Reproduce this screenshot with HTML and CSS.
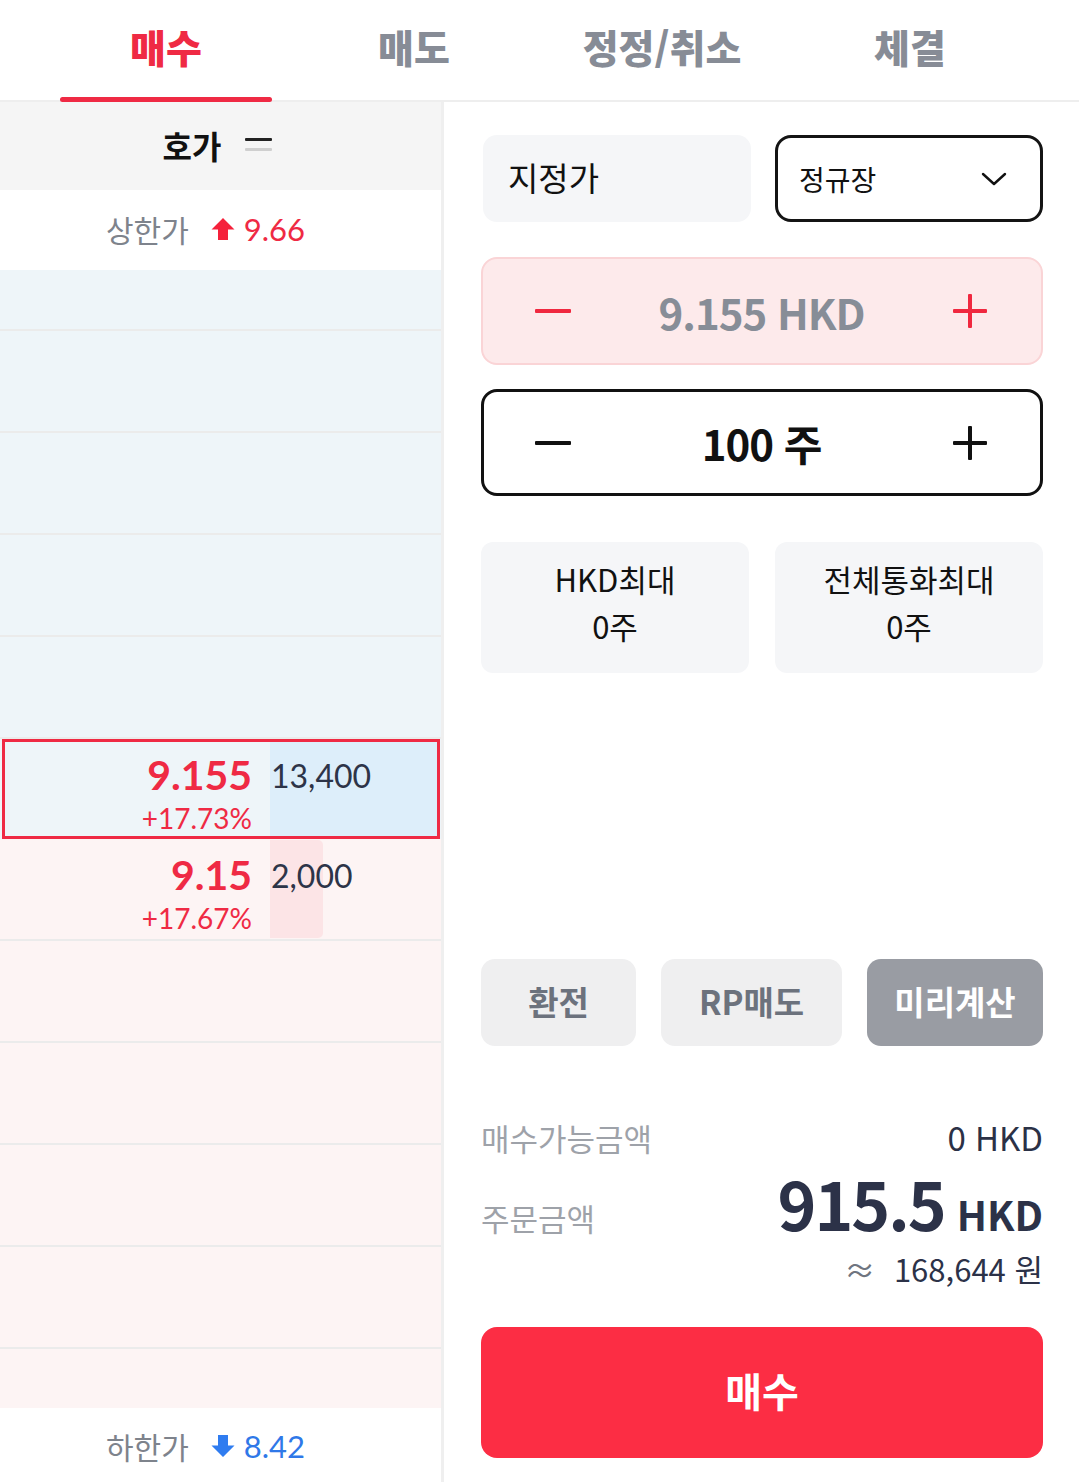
FILE: index.html
```html
<!DOCTYPE html>
<html lang="ko">
<head>
<meta charset="utf-8">
<title>주문</title>
<link rel="stylesheet" href="styles.css">
</head>
<body>
<div class="app">
  <nav class="tabs">
    <div class="tab active">매수</div>
    <div class="tab">매도</div>
    <div class="tab">정정/취소</div>
    <div class="tab">체결</div>
  </nav>
  <div class="main">
    <section class="book">
      <div class="book-head">
        <span class="book-title">호가</span>
        <span class="eq-icon"><i class="eq-top"></i><i class="eq-bot"></i></span>
      </div>
      <div class="limit up">
        <span class="limit-label">상한가</span>
        <svg class="arr" width="24" height="24" viewBox="0 0 24 24"><path d="M12 1 L23.5 12.5 H17 V23 H7 V12.5 H0.5 Z" fill="#f5213b"/></svg>
        <span class="limit-val up-val">9.66</span>
      </div>
      <div class="ladder">
        <div class="lv ask first"></div>
        <div class="lv ask"></div>
        <div class="lv ask"></div>
        <div class="lv ask"></div>
        <div class="lv ask"></div>
        <div class="lv ask cur">
          <div class="px"><b>9.155</b><span>+17.73%</span></div>
          <div class="qty"><i class="bar ask-bar" style="width:100%"></i><span>13,400</span></div>
        </div>
        <div class="lv bid">
          <div class="px"><b>9.15</b><span>+17.67%</span></div>
          <div class="qty"><i class="bar bid-bar" style="width:31%"></i><span>2,000</span></div>
        </div>
        <div class="lv bid"></div>
        <div class="lv bid"></div>
        <div class="lv bid"></div>
        <div class="lv bid"></div>
        <div class="lv bid"></div>
      </div>
      <div class="limit down">
        <span class="limit-label">하한가</span>
        <svg class="arr" width="24" height="24" viewBox="0 0 24 24"><path d="M12 23 L23.5 11.5 H17 V1 H7 V11.5 H0.5 Z" fill="#2f7cf0"/></svg>
        <span class="limit-val down-val">8.42</span>
      </div>
    </section>

    <section class="order">
      <div class="row-type">
        <div class="type-box">지정가</div>
        <div class="session-box">
          <span>정규장</span>
          <svg width="26" height="14" viewBox="0 0 26 14"><path d="M2 2 L13 12 L24 2" fill="none" stroke="#111" stroke-width="2.4" stroke-linecap="round" stroke-linejoin="round"/></svg>
        </div>
      </div>

      <div class="stepper price-step">
        <svg class="step-ic" width="36" height="34" viewBox="0 0 36 34"><rect x="0" y="15" width="36" height="4" rx="1" fill="#f0283f"/></svg>
        <span class="step-val price-val">9.155 HKD</span>
        <svg class="step-ic" width="36" height="34" viewBox="0 0 36 34"><rect x="1" y="15" width="34" height="4" rx="1" fill="#f0283f"/><rect x="16" y="0" width="4" height="34" rx="1" fill="#f0283f"/></svg>
      </div>

      <div class="stepper qty-step">
        <svg class="step-ic" width="36" height="34" viewBox="0 0 36 34"><rect x="0" y="15" width="36" height="4" rx="1" fill="#111"/></svg>
        <span class="step-val qty-val">100 주</span>
        <svg class="step-ic" width="36" height="34" viewBox="0 0 36 34"><rect x="1" y="15" width="34" height="4" rx="1" fill="#111"/><rect x="16" y="0" width="4" height="34" rx="1" fill="#111"/></svg>
      </div>

      <div class="max-row">
        <div class="max-box"><span>HKD최대</span><span>0주</span></div>
        <div class="max-box"><span>전체통화최대</span><span>0주</span></div>
      </div>

      <div class="actions">
        <div class="act">환전</div>
        <div class="act">RP매도</div>
        <div class="act dark">미리계산</div>
      </div>

      <div class="summary">
        <div class="sum-row r1">
          <span class="sum-label">매수가능금액</span>
          <span class="sum-val">0 HKD</span>
        </div>
        <div class="sum-row r2">
          <span class="sum-label">주문금액</span>
          <span class="total"><b>915.5</b><em>HKD</em></span>
        </div>
        <div class="sum-row r3">
          <span></span>
          <span class="krw"><i>≈</i> 168,644 원</span>
        </div>
      </div>

      <div class="buy-btn">매수</div>
    </section>
  </div>
</div>
</body>
</html>
```

FILE: styles.css
```css
* { box-sizing: border-box; }
html, body { margin: 0; padding: 0; background: #fff; }
body {
  width: 1079px;
  height: 1482px;
  overflow: hidden;
  font-family: "Noto Sans CJK KR", "Noto Sans", sans-serif;
  color: #111;
}
.app { width: 1079px; height: 1482px; display: flex; flex-direction: column; }

/* tabs */
.tabs {
  height: 102px;
  display: grid;
  grid-template-columns: repeat(4, 248px);
  padding-left: 42px;
  border-bottom: 2px solid #eeeeee;
}
.tab {
  position: relative;
  display: flex;
  align-items: center;
  justify-content: center;
  padding-bottom: 8px;
  font-size: 39px;
  font-weight: 900;
  color: #878c96;
}
.tab.active { color: #ef2a44; }
.tab.active::after {
  content: "";
  position: absolute;
  left: 18px;
  right: 18px;
  bottom: -2px;
  height: 5px;
  border-radius: 3px;
  background: #ef2a44;
}

.main { flex: 1; display: flex; }

/* order book */
.book {
  width: 444px;
  border-right: 3px solid #efefef;
  display: flex;
  flex-direction: column;
}
.book-head {
  height: 88px;
  background: #f5f5f5;
  display: flex;
  align-items: center;
  justify-content: center;
  gap: 24px;
  padding-right: 6px;
  padding-bottom: 2px;
}
.book-title { font-size: 32px; font-weight: 700; color: #111; }
.eq-icon { display: flex; flex-direction: column; gap: 7px; width: 27px; margin-top: -2px; }
.eq-icon i { display: block; height: 3px; border-radius: 1px; }
.eq-top { background: #222; }
.eq-bot { background: #cfcfcf; }

.limit {
  display: flex;
  align-items: center;
  padding-left: 106px;
  background: #fff;
}
.limit.up { height: 80px; padding-bottom: 2px; }
.limit.down { height: 74px; padding-top: 2px; }
.limit-label { font-size: 30px; color: #7e838c; }
.arr { margin-left: 22px; margin-right: 9px; }
.limit-val { font-family: Lato, "Liberation Sans", sans-serif; font-size: 31px; }
.up-val { color: #ef2a44; }
.down-val { color: #2f78e8; }

.ladder { height: 1138px; overflow: hidden; }
.lv {
  position: relative;
  height: 102px;
  display: flex;
  border-bottom: 2px solid #ebebeb;
}
.lv.first { margin-top: -41px; }
.lv.ask { background: #eef5f9; }
.lv.bid { background: #fdf4f4; }
.lv.cur { height: 100px; border-bottom: 0; }
.lv.cur::after {
  content: "";
  position: absolute;
  top: 0; bottom: 0; left: 2px; right: 1px;
  border: 3px solid #ef2a44;
}
.px {
  width: 252px;
  display: flex;
  flex-direction: column;
  align-items: flex-end;
  padding-top: 13px;
  font-family: Lato, "Liberation Sans", sans-serif;
  color: #ef2a44;
}
.px b { font-size: 41px; font-weight: 700; line-height: 46px; }
.px span { font-size: 28px; line-height: 30px; margin-top: 5px; }
.qty {
  position: relative;
  flex: 1;
  margin-left: 18px;
  padding-top: 14px;
  padding-left: 1px;
  font-family: Lato, "Liberation Sans", sans-serif;
  font-size: 32px;
  line-height: 46px;
  color: #2d3448;
}
.qty span { position: relative; }
.bar { position: absolute; left: 0; top: 0; bottom: 0; }
.ask-bar { background: #ddeefa; top: 3px; bottom: 3px; right: 3px; width: auto !important; }
.bid-bar { background: #fce4e6; border-radius: 0 5px 5px 0; top: 1px; bottom: 1px; }

/* order form */
.order {
  flex: 1;
  display: flex;
  flex-direction: column;
  padding: 33px 36px 0 37px;
}
.row-type {
  display: grid;
  grid-template-columns: 270px 1fr;
  gap: 24px;
  height: 87px;
}
.type-box {
  background: #f5f6f8;
  border-radius: 14px;
  display: flex;
  align-items: center;
  padding-left: 25px;
  padding-bottom: 4px;
  font-size: 33px;
  color: #111;
  margin-left: 2px;
}
.session-box {
  border: 3px solid #141414;
  border-radius: 16px;
  display: flex;
  align-items: center;
  justify-content: space-between;
  padding: 0 33px 0 21px;
  font-size: 28px;
  color: #111;
}

.stepper {
  display: flex;
  align-items: center;
  justify-content: space-between;
  border-radius: 16px;
}
.price-step {
  margin-top: 35px;
  height: 108px;
  background: #fdeaeb;
  border: 2px solid #fad4d6;
  padding: 0 53px 0 52px;
}
.qty-step {
  margin-top: 24px;
  height: 107px;
  border: 3px solid #111;
  padding: 0 52px 0 51px;
}
.step-val { font-size: 42px; font-weight: 700; letter-spacing: -1px; }
.price-val { color: #878d97; }
.qty-val { color: #111; }

.max-row {
  margin-top: 46px;
  display: grid;
  grid-template-columns: 1fr 1fr;
  gap: 26px;
  height: 131px;
}
.max-box {
  background: #f5f6f8;
  border-radius: 12px;
  display: flex;
  flex-direction: column;
  align-items: center;
  justify-content: center;
  padding-bottom: 12px;
  font-size: 31px;
  line-height: 47px;
  color: #111;
}

.actions {
  margin-top: 286px;
  display: grid;
  grid-template-columns: 155px 181px 1fr;
  gap: 25px;
  height: 87px;
}
.act {
  display: flex;
  align-items: center;
  justify-content: center;
  padding-bottom: 4px;
  border-radius: 14px;
  background: #efeff0;
  color: #6c727d;
  font-size: 33px;
  font-weight: 700;
}
.act.dark { background: #999ca3; color: #fff; }

.summary { margin-top: 71px; }
.sum-row { display: flex; justify-content: space-between; align-items: baseline; }
.r1 { height: 40px; line-height: 40px; }
.r2 { margin-top: 10px; height: 70px; line-height: 70px; }
.r3 { margin-top: 12px; height: 40px; line-height: 40px; }
.sum-label { font-size: 31px; color: #9ea2a9; }
.sum-val { font-size: 33px; font-weight: 400; color: #2b3146; }
.total { color: #2c3248; }
.total b { font-size: 66px; font-weight: 700; letter-spacing: -2px; }
.total em { font-style: normal; font-size: 40px; font-weight: 700; margin-left: 12px; }
.krw { font-size: 31px; color: #2c3248; }
.krw i { font-style: normal; color: #6f7580; margin-right: 10px; }

.buy-btn {
  margin-top: 38px;
  height: 131px;
  border-radius: 16px;
  background: #fc2d44;
  color: #fff;
  display: flex;
  align-items: center;
  justify-content: center;
  padding-bottom: 6px;
  font-size: 40px;
  font-weight: 700;
}
```
